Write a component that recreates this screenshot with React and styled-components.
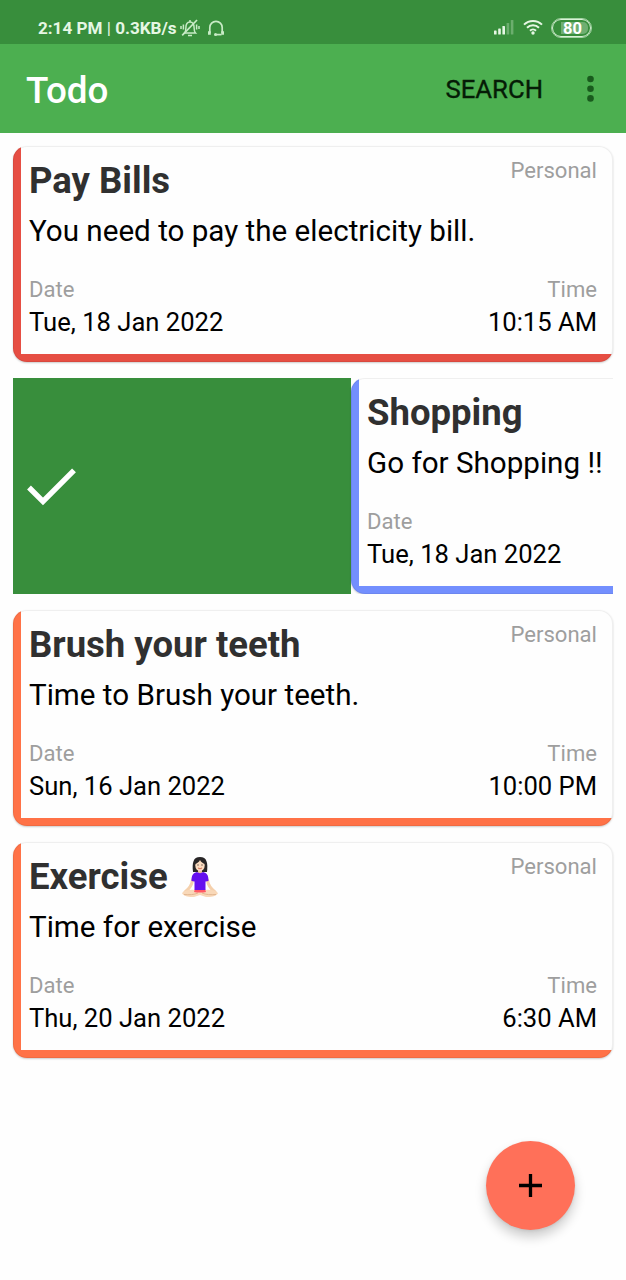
import React from "react";
import styled, { createGlobalStyle } from "styled-components";

const GlobalStyle = createGlobalStyle`
  * { box-sizing: border-box; }
  body {
    margin: 0;
    background: #fff;
    font-family: Roboto, "Liberation Sans", sans-serif;
    color: #000;
  }
`;

const Screen = styled.main`
  position: relative;
  display: flex;
  flex-direction: column;
  width: 626px;
  height: 1280px;
  overflow: hidden;
  background: #fefefe;
`;

const StatusBar = styled.div`
  flex: none;
  display: flex;
  align-items: center;
  justify-content: space-between;
  height: 44px;
  padding: 12px 35px 0 38px;
  background: #388e3c;
  color: #e6f7e4;
`;

const StatusGroup = styled.div`
  display: flex;
  align-items: center;
  gap: ${(p) => p.$gap}px;
`;

const StatusText = styled.span`
  font-size: 17.1px;
  font-weight: 700;
  line-height: 20px;
  white-space: pre;
`;

const Separator = styled.span`
  font-weight: 400;
`;

const AppBar = styled.header`
  flex: none;
  display: flex;
  align-items: center;
  height: 89px;
  padding: 4px 28px 0 26px;
  background: #4caf50;
`;

const AppTitle = styled.h1`
  flex: 1;
  margin: 0;
  color: #fff;
  font-size: 36.8px;
  font-weight: 500;
  line-height: 44px;
`;

const SearchButton = styled.button`
  border: 0;
  padding: 0;
  margin: -3px 41px 0 0;
  background: none;
  color: #051c06;
  font-family: inherit;
  font-size: 25.7px;
  font-weight: 400;
  -webkit-text-stroke: 0.35px #051c06;
`;

const MenuButton = styled.button`
  display: flex;
  border: 0;
  padding: 0;
  margin-top: -4px;
  background: none;
`;

const List = styled.section`
  display: flex;
  flex-direction: column;
  gap: 16px;
  padding: 13px 13px 0;
`;

const Slot = styled.div`
  display: flex;
  height: 216px;
  overflow: ${(p) => (p.$swiped ? "hidden" : "visible")};
`;

const DoneAction = styled.div`
  flex: none;
  display: flex;
  align-items: center;
  width: 338px;
  padding: 2px 0 0 14px;
  background: #388e3c;
`;

const Card = styled.article`
  flex: none;
  display: flex;
  width: 600px;
  height: 216px;
  padding: 0 0 8px 8px;
  overflow: hidden;
  border-radius: 14px;
  background:
    linear-gradient(${(p) => p.$accent}, ${(p) => p.$accent}) left / 8px 100% no-repeat,
    linear-gradient(${(p) => p.$accent}, ${(p) => p.$accent}) bottom / 100% 8px no-repeat,
    #fefefe;
  box-shadow: 0 1px 2px rgba(0, 0, 0, 0.2), inset 0 0 0 1px rgba(0, 0, 0, 0.06);
`;

const CardBody = styled.div`
  flex: 1;
  display: flex;
  flex-direction: column;
  padding: 11px 16px 0 8px;
`;

const Row = styled.div`
  display: flex;
  align-items: flex-start;
  justify-content: space-between;
`;

const Title = styled.h2`
  display: flex;
  align-items: center;
  gap: 13px;
  margin: 0;
  height: 48px;
  color: #303030;
  font-size: 36.5px;
  font-weight: 700;
  line-height: 48px;
`;

const Description = styled.p`
  margin: 6px 0 0;
  font-size: 29.6px;
  line-height: 40px;
`;

const Label = styled.span`
  color: #9e9e9e;
  font-size: 22.1px;
  line-height: 28px;
`;

const Tag = styled(Label)`
  line-height: 26px;
`;

const Value = styled.span`
  font-size: 25.6px;
  line-height: 34px;
`;

const Labels = styled(Row)`
  margin-top: 24px;
`;

const Values = styled(Row)`
  margin-top: 2px;
`;

const AddButton = styled.button`
  position: absolute;
  right: 51px;
  bottom: 50px;
  display: flex;
  align-items: center;
  justify-content: center;
  width: 89px;
  height: 89px;
  border: 0;
  padding: 0;
  border-radius: 50%;
  background: #ff7059;
  box-shadow: 0 7px 12px rgba(0, 0, 0, 0.2), 0 1px 3px rgba(0, 0, 0, 0.08);
`;

const MutedBell = () => (
  <svg width="20" height="18" viewBox="0 0 20 18" fill="none" stroke="#c8ebc6" strokeWidth="1.5">
    <path d="M4.500 14c1-1 1.400-2.600 1.400-5.200C5.900 4.800 7.600 3 10 3s4.100 1.800 4.100 5.800c0 2.600.4 4.200 1.400 5.200z" />
    <path d="M8 16.600h4M10 1v2M3.400 5.500v5M16.600 5.500v5M1 7v3M19 7v3" />
    <path d="M2.200 16.300 17 1" strokeWidth="1.700" />
  </svg>
);

const Headset = () => (
  <svg width="18" height="18" viewBox="0 0 18 18" fill="none" stroke="#c8ebc6" strokeWidth="1.700">
    <path d="M2.800 14V8.500a6.200 6.200 0 0 1 12.400 0V14" />
    <path d="M1 14h2.800M14.200 14H17" strokeWidth="3.600" />
    <path d="M14.500 15.600H9" />
    <circle cx="8.500" cy="15.500" r="1.500" fill="#c8ebc6" stroke="none" />
  </svg>
);

const Signal = () => (
  <svg width="20" height="16" viewBox="0 0 20 16" fill="#e6f7e4">
    <rect x="0" y="10.500" width="2.600" height="4" rx="0.600" />
    <rect x="4.200" y="8.500" width="2.600" height="6" rx="0.600" />
    <rect x="8.400" y="6" width="2.600" height="8.500" rx="0.600" />
    <rect x="12.600" y="3" width="2.600" height="11.500" rx="0.600" opacity="0.3" />
    <rect x="16.800" y="0" width="2.600" height="14.500" rx="0.600" opacity="0.3" />
  </svg>
);

const Wifi = () => (
  <svg width="20" height="18" viewBox="0 0 20 18" fill="none" stroke="#e6f7e4" strokeWidth="2">
    <path d="M1 5.600a12.800 12.800 0 0 1 18 0M4 8.800a8.500 8.500 0 0 1 12 0M7 11.700a4.300 4.300 0 0 1 6 0" />
    <circle cx="10" cy="14" r="1.700" fill="#e6f7e4" stroke="none" />
  </svg>
);

const Battery = styled.span`
  display: flex;
  align-items: center;
  justify-content: center;
  width: 39px;
  height: 18px;
  border: 1.500px solid #d9f3d7;
  outline: 0.500px solid #a5d3a5;
  border-radius: 9px;
  padding: 0 2px;
`;

const BatteryLevel = styled.span`
  width: 27px;
  height: 12px;
  margin-left: 6px;
  padding-right: 4px;
  border-radius: 0 5px 5px 0;
  background: #6fae71;
  color: #fff;
  font-size: 16.5px;
  font-weight: 700;
  line-height: 13px;
  text-align: center;
`;

const More = () => (
  <svg width="14" height="28" viewBox="0 0 14 28" fill="#195b1d">
    <circle cx="6.500" cy="4" r="3.300" />
    <circle cx="6.500" cy="13.700" r="3.300" />
    <circle cx="6.500" cy="23.400" r="3.300" />
  </svg>
);

const Check = () => (
  <svg width="50" height="38" viewBox="0 0 50 38" fill="none" stroke="#fff" strokeWidth="5.400">
    <path d="m2 19.500 14 14L47 2.300" />
  </svg>
);

const Plus = () => (
  <svg width="23" height="23" viewBox="0 0 23 23" stroke="#000" strokeWidth="3.300">
    <path d="M0 11.500h23M11.500 0v23" />
  </svg>
);

const LotusPose = () => (
  <svg width="38" height="42" viewBox="0 0 38 42">
    <path d="M12 16C11 7 12 1 19 1s8 6 7 15z" fill="#292627" />
    <path d="M17 13h4v5h-4z" fill="#e9c19c" />
    <ellipse cx="19" cy="9.500" rx="4.700" ry="5.800" fill="#fbdcc0" />
    <path d="M14 8c2-.5 4-2 5-4 1 2 3 3.500 5 4 0-4-2-6-5-6s-5 2-5 6z" fill="#292627" />
    <path d="M16.200 9h1.600M20.200 9h1.600" stroke="#4c3b34" strokeWidth=".8" />
    <path d="M17 12q2 1.700 4 0" fill="none" stroke="#c9503c" strokeWidth=".8" />
    <path d="M11.500 24C11 29 8 33 4 36M26.500 24C27 29 30 33 34 36" fill="none" stroke="#f5d0ac" strokeWidth="3" strokeLinecap="round" />
    <path d="M1 37c3-3 8-3.500 12-3h12c4-.5 9 0 12 3-1 3-7 4.500-12 4l-6-2-6 2C8 41.500 2 40 1 37z" fill="#f9d8b8" />
    <path d="M3 38.500c5 .5 10 .3 14-1.500M35 38.500c-5 .5-10 .3-14-1.500" fill="none" stroke="#e2b791" />
    <path d="M14 33h10l1 3c-3 .8-9 .8-12 0z" fill="#ff5864" />
    <path d="M16 16c1.500 1.500 4.500 1.500 6 0 4 1 5.500 3 5.500 9l-3 .5V34h-11v-8.500l-3-.5c0-6 1.500-8 5.500-9z" fill="#6510ef" />
  </svg>
);

const todos = [
  { title: "Pay Bills", text: "You need to pay the electricity bill.", tag: "Personal", date: "Tue, 18 Jan 2022", time: "10:15 AM", accent: "#e64e43" },
  { title: "Shopping", text: "Go for Shopping !!", tag: "", date: "Tue, 18 Jan 2022", time: "", accent: "#738ffe", swiped: true },
  { title: "Brush your teeth", text: "Time to Brush your teeth.", tag: "Personal", date: "Sun, 16 Jan 2022", time: "10:00 PM", accent: "#ff7247" },
  { title: "Exercise", icon: <LotusPose />, text: "Time for exercise", tag: "Personal", date: "Thu, 20 Jan 2022", time: "6:30 AM", accent: "#ff7247" },
];

const TodoCard = ({ todo }) => (
  <Slot $swiped={todo.swiped}>
    {todo.swiped && (
      <DoneAction>
        <Check />
      </DoneAction>
    )}
    <Card $accent={todo.accent}>
      <CardBody>
        <Row>
          <Title>
            {todo.title}
            {todo.icon}
          </Title>
          <Tag>{todo.tag}</Tag>
        </Row>
        <Description>{todo.text}</Description>
        <Labels>
          <Label>Date</Label>
          {todo.time && <Label>Time</Label>}
        </Labels>
        <Values>
          <Value>{todo.date}</Value>
          <Value>{todo.time}</Value>
        </Values>
      </CardBody>
    </Card>
  </Slot>
);

export default function App() {
  return (
    <>
      <GlobalStyle />
      <Screen>
        <StatusBar>
          <StatusGroup $gap={7}>
            <StatusGroup $gap={3}>
              <StatusText>
                2:14 PM <Separator>|</Separator> 0.3KB/s
              </StatusText>
              <MutedBell />
            </StatusGroup>
            <Headset />
          </StatusGroup>
          <StatusGroup $gap={9}>
            <Signal />
            <Wifi />
            <Battery>
              <BatteryLevel>80</BatteryLevel>
            </Battery>
          </StatusGroup>
        </StatusBar>
        <AppBar>
          <AppTitle>Todo</AppTitle>
          <SearchButton>SEARCH</SearchButton>
          <MenuButton aria-label="More options">
            <More />
          </MenuButton>
        </AppBar>
        <List>
          {todos.map((todo) => (
            <TodoCard key={todo.title} todo={todo} />
          ))}
        </List>
        <AddButton aria-label="Add">
          <Plus />
        </AddButton>
      </Screen>
    </>
  );
}
